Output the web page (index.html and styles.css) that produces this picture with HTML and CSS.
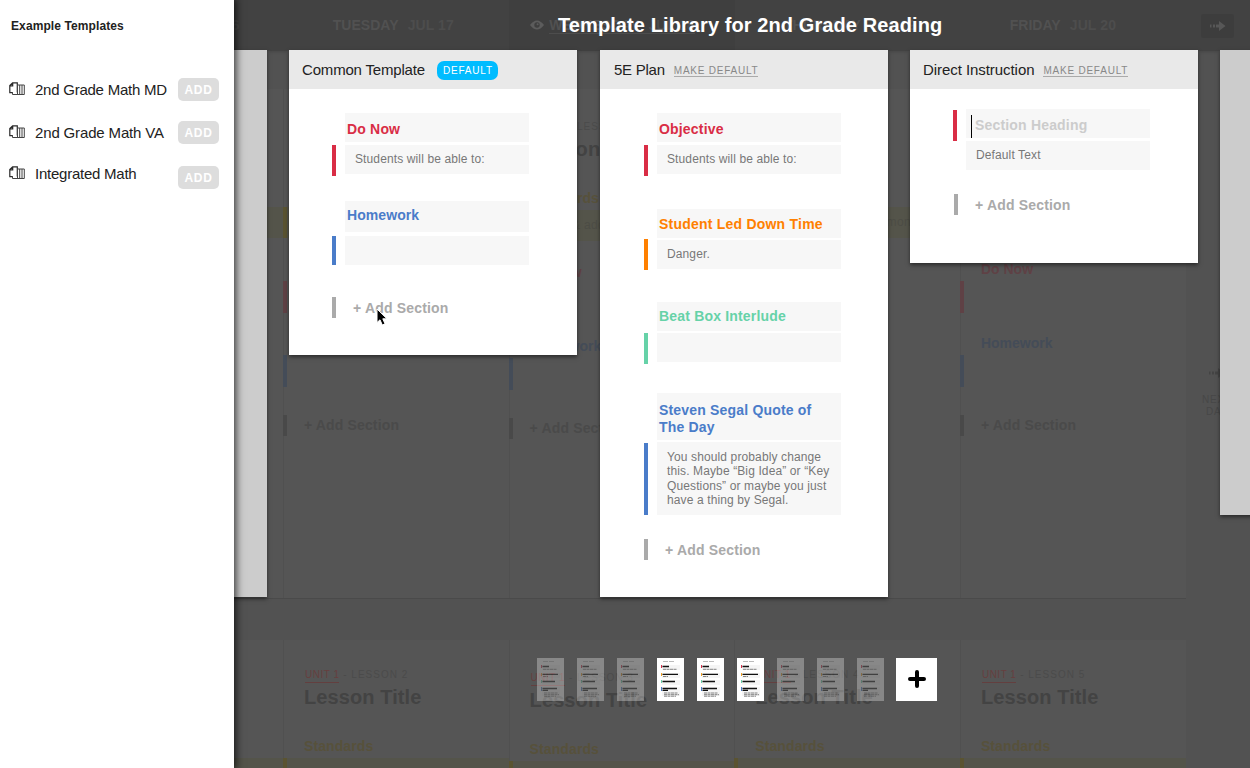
FILE: index.html
```html
<!DOCTYPE html>
<html lang="en">
<head>
<meta charset="utf-8">
<title>Template Library</title>
<link rel="stylesheet" href="styles.css">
</head>
<body>
<svg class="defs" aria-hidden="true">
  <symbol id="stack" viewBox="0 0 16 14">
    <path d="M8.300 10.500V.8H3.600L.8 3.600v7h3M.8 3.800h2.900V1" fill="none" stroke="#2a2a2a" stroke-width="1.200"/>
    <path d="M8.300 3h7v9.500H3.500v-2M8.500 3v9.500M10.700 3v9.500M13 3v9.500" fill="none" stroke="#444" stroke-width="1"/>
  </symbol>
  <symbol id="arrow" viewBox="0 0 16 10">
    <path d="M0 3.500h1.500v3H0zM3 3.500h2v3H3zM6 3.500h3V0l6.500 5L9 10V6.500H6z"/>
  </symbol>
  <symbol id="page" viewBox="0 0 27 43">
    <path d="M0 0h27v43H0z" fill="#fff"/>
    <path d="M5 7h18v5H5zM5 15h18v5H5zM5 22h18v5H5zM5 29h18v9H5z" fill="#f5f5f5"/>
    <path d="M6 3.500h5M12 3.500h5" stroke="#aaa" stroke-width=".8"/>
    <path d="M5.500 8.500h6.500M5.500 16.300h15.500M5.500 23.500h12.500M5.500 30.500h14.500M5.500 32.300h5.500" stroke="#111" stroke-width="1.300"/>
    <path d="M6 11.300h14M6 18.500h5M7 35h14M7 36.700h15M7 38.200h12" stroke="#777" stroke-width=".9" stroke-dasharray="3 .5"/>
    <path d="M4.500 7v3" stroke="#d9304a"/><path d="M4.500 15v3" stroke="#f0a020"/><path d="M4.500 22v3" stroke="#66d2a8"/><path d="M4.500 29v4" stroke="#4b7cc8"/>
  </symbol>
</svg>
<div class="screen">
  <div class="planner">
    <header class="days">
      <div class="day day-first"><b>MONDAY</b><span>JUL 16</span></div>
      <div class="day"><b>TUESDAY</b><span>JUL 17</span></div>
      <div class="day day-current">
        <svg class="eye" viewBox="0 0 14 10"><path d="M0 5Q7-4 14 5Q7 14 0 5z" fill="#5c5c5c"/><circle cx="7" cy="5" r="2.700" fill="#3f3f3f"/><circle cx="7.600" cy="4.300" r="1" fill="#5c5c5c"/></svg>
        <div class="day-link"><b>WEDNESDAY</b><span>JUL 18</span></div>
      </div>
      <div class="day"><b>THURSDAY</b><span>JUL 19</span></div>
      <div class="day"><b>FRIDAY</b><span>JUL 20</span></div>
      <div class="next-button"><svg class="arrow"><use href="#arrow"/></svg></div>
    </header>
    <div class="week">
      <div class="rows">
        <div class="row row-full">
          <div class="lesson"><div class="band"></div></div>
          <div class="lesson">
            <div class="unit"><u>UNIT 1</u> - LESSON 2</div><div class="lesson-title">Lesson Title</div>
            <div class="standards">Standards</div><div class="band"><i></i><span>Search &amp; add from common</span></div>
            <div class="item item-red">Do Now</div><div class="item item-blue">Homework</div><div class="more">+ Add Section</div>
          </div>
          <div class="lesson lesson-current">
            <div class="unit"><u>UNIT 1</u> - LESSON 3</div><div class="lesson-title">Lesson Title</div>
            <div class="standards">Standards</div><div class="band"><i></i><span>Search &amp; add from common</span></div>
            <div class="item item-red">Do Now</div><div class="item item-blue">Homework</div><div class="more">+ Add Section</div>
          </div>
          <div class="lesson">
            <div class="unit"><u>UNIT 1</u> - LESSON 4</div><div class="lesson-title">Lesson Title</div>
            <div class="standards">Standards</div><div class="band"><i></i><span>Search &amp; add from common</span></div>
            <div class="item item-red">Do Now</div><div class="item item-blue">Homework</div><div class="more">+ Add Section</div>
          </div>
          <div class="lesson">
            <div class="unit"><u>UNIT 1</u> - LESSON 5</div><div class="lesson-title">Lesson Title</div>
            <div class="standards">Standards</div><div class="band"><i></i><span>Search &amp; add from common</span></div>
            <div class="item item-red">Do Now</div><div class="item item-blue">Homework</div><div class="more">+ Add Section</div>
          </div>
        </div>
        <div class="row row-next">
          <div class="lesson"><div class="band"></div></div>
          <div class="lesson"><div class="unit"><u>UNIT 1</u> - LESSON 2</div><div class="lesson-title">Lesson Title</div><div class="standards">Standards</div><div class="band"><i></i></div></div>
          <div class="lesson lesson-current"><div class="unit"><u>UNIT 1</u> - LESSON 3</div><div class="lesson-title">Lesson Title</div><div class="standards">Standards</div><div class="band"><i></i></div></div>
          <div class="lesson"><div class="unit"><u>UNIT 1</u> - LESSON 4</div><div class="lesson-title">Lesson Title</div><div class="standards">Standards</div><div class="band"><i></i></div></div>
          <div class="lesson"><div class="unit"><u>UNIT 1</u> - LESSON 5</div><div class="lesson-title">Lesson Title</div><div class="standards">Standards</div><div class="band"><i></i></div></div>
        </div>
      </div>
      <div class="next-day"><svg class="arrow"><use href="#arrow"/></svg><div>NEXT<br>DAY</div></div>
    </div>
  </div>

  <main class="library">
    <h1 class="library-title">Template Library for 2nd Grade Reading</h1>
    <div class="cards">
      <div class="card card-prev"></div>
      <article class="card card-common">
        <header class="card-head"><span class="name">Common Template</span><span class="badge">DEFAULT</span></header>
        <section class="section red s-donow"><h2>Do Now</h2><i></i><p>Students will be able to:</p></section>
        <section class="section blue s-homework"><h2>Homework</h2><i></i><p></p></section>
        <div class="add-section"><i></i><span>+ Add Section</span></div>
      </article>
      <article class="card card-plan">
        <header class="card-head"><span class="name">5E Plan</span><a class="make">MAKE DEFAULT</a></header>
        <section class="section red s-objective"><h2>Objective</h2><i></i><p>Students will be able to:</p></section>
        <section class="section orange s-down"><h2>Student Led Down Time</h2><i></i><p>Danger.</p></section>
        <section class="section green s-beat"><h2>Beat Box Interlude</h2><i></i><p></p></section>
        <section class="section blue s-quote"><h2>Steven Segal Quote of<br>The Day</h2><i></i><p>You should probably change<br>this. Maybe “Big Idea” or “Key<br>Questions” or maybe you just<br>have a thing by Segal.</p></section>
        <div class="add-section"><i></i><span>+ Add Section</span></div>
      </article>
      <article class="card card-direct">
        <header class="card-head"><span class="name">Direct Instruction</span><a class="make">MAKE DEFAULT</a></header>
        <section class="section red s-new"><h2><b class="caret"></b>Section Heading</h2><i></i><p>Default Text</p></section>
        <div class="add-section"><i></i><span>+ Add Section</span></div>
      </article>
      <div class="card card-next"></div>
    </div>
    <nav class="pager">
      <svg class="thumb dim"><use href="#page"/></svg>
      <svg class="thumb dim"><use href="#page"/></svg>
      <svg class="thumb dim"><use href="#page"/></svg>
      <svg class="thumb"><use href="#page"/></svg>
      <svg class="thumb"><use href="#page"/></svg>
      <svg class="thumb"><use href="#page"/></svg>
      <svg class="thumb dim"><use href="#page"/></svg>
      <svg class="thumb dim"><use href="#page"/></svg>
      <svg class="thumb dim"><use href="#page"/></svg>
      <div class="new-template"><svg width="18" height="18" viewBox="0 0 18 18"><path d="M9 2v14M2 9h14" stroke="#000" stroke-width="4" stroke-linecap="round"/></svg></div>
    </nav>
  </main>

  <aside class="sidebar">
    <h3>Example Templates</h3>
    <div class="example"><svg class="stack"><use href="#stack"/></svg><span>2nd Grade Math MD</span><button>ADD</button></div>
    <div class="example example-va"><svg class="stack"><use href="#stack"/></svg><span>2nd Grade Math VA</span><button>ADD</button></div>
    <div class="example example-int"><svg class="stack"><use href="#stack"/></svg><span>Integrated Math</span><button>ADD</button></div>
  </aside>

  <svg class="pointer" viewBox="0 0 13 19"><path d="M1 1v13.500l3-2.700 2.300 5.200 2.700-1.200-2.200-5h4.200z" fill="#000" stroke="#fff" stroke-width="1"/></svg>
</div>
</body>
</html>
```

FILE: styles.css
```css
* { box-sizing: border-box; }
body { margin: 0; font-family: "Liberation Sans", Arial, sans-serif; overflow: hidden; }
h1, h2, h3, p { margin: 0; }
svg { display: block; }
.defs { position: absolute; width: 0; height: 0; }
.screen { position: relative; width: 1250px; height: 768px; overflow: hidden; background: #525252; }

/* dimmed planner behind the library */
.planner { position: absolute; inset: 0; display: flex; flex-direction: column; }
.days { display: flex; flex: none; height: 51px; padding-left: 58px; background: #424242; color: #515151; font-size: 14px; line-height: 50px; box-shadow: 0 1px 3px rgba(0,0,0,.15); }
.day { display: flex; flex: none; gap: 9px; width: 225.67px; padding-left: 49px; }
.day span { font-weight: bold; color: #4d4d4d; letter-spacing: .1px; }
.day b { letter-spacing: .05px; }
.day-first { padding-left: 65px; }
.day-current { gap: 5px; padding-left: 21px; background: #3f3f3f; }
.eye { width: 14px; height: 10px; margin-top: 20px; }
.day-link { display: flex; gap: 9px; height: 34px; border-bottom: 1px solid #4d4d4d; }
.next-button { display: flex; align-items: center; justify-content: center; width: 33px; height: 24px; margin: 14px 0 0 15px; border-radius: 3px; background: #3d3d3d; }
.arrow { width: 16px; height: 10px; fill: #575757; }
.week { display: flex; flex: 1; }
.rows { width: 1186px; }
.row { display: flex; padding-left: 57.300px; }
.row-full { height: 548px; padding-top: 38px; border-bottom: 1px solid #4a4a4a; }
.row-next { height: 169px; padding-top: 41px; }
.lesson { width: 225.670px; padding-top: 27px; background: #555; border-left: 1px solid #505050; }
.lesson-current { padding-top: 30px; }
.unit { height: 18px; margin-left: 21px; font-size: 10px; line-height: 15px; letter-spacing: 1px; color: #4b4b4b; }
.unit u { display: inline-block; letter-spacing: .5px; color: #663f3f; text-decoration: none; border-bottom: 1px solid #633f3f; }
.lesson-title { margin-left: 20px; font-size: 20px; font-weight: bold; line-height: 24px; letter-spacing: .1px; color: #434343; }
.standards { margin: 28px 0 0 20px; font-size: 14px; font-weight: bold; line-height: 18px; color: #57513b; letter-spacing: .1px; }
.band { display: flex; width: 225.670px; height: 31px; margin: 3px 0 0 -1px; background: #54544a; font-size: 12px; line-height: 30px; letter-spacing: .3px; color: #4c4c45; white-space: nowrap; overflow: hidden; }
.band i { flex: none; width: 4px; background: #5a5331; }
.band span { margin-left: 16px; }
.lesson:first-child .band { margin-top: 91px; }
.row-next .band { height: 10px; }
.item { height: 74px; padding: 22px 0 0 20px; font-size: 14px; font-weight: bold; line-height: 18px; }
.item::after { content: ""; display: block; width: 4px; height: 32px; margin: 3px 0 0 -21px; background: currentColor; }
.item-red { color: #5f4145; }
.item-blue { color: #444c58; }
.more { height: 21px; margin: 29px 0 0 -1px; padding-left: 17px; border-left: 4px solid #494949; color: #4a4a4a; font-size: 14px; font-weight: bold; line-height: 20px; letter-spacing: .15px; }
.next-day { width: 38px; margin: 317px 0 0 12px; text-align: center; font-size: 10px; line-height: 12px; letter-spacing: .8px; color: #474747; }
.next-day .arrow { margin: 0 0 16px 11px; fill: #444; }

/* library overlay */
.library { position: absolute; inset: 0; display: flex; flex-direction: column; }
.library-title { width: 386px; margin-left: 558px; height: 50px; font-size: 20px; line-height: 50px; color: #fff; letter-spacing: .09px; white-space: nowrap; }
.cards { display: flex; align-items: flex-start; gap: 22px; height: 608px; margin-left: -21px; }
.card { flex: none; width: 288px; background: #fff; box-shadow: 0 2px 4px rgba(0,0,0,.5); }
.card-prev, .card-next { background: #ccc; }
.card-prev { height: 547px; }
.card-next { height: 465px; }
.card-common { height: 305px; }
.card-plan { height: 547px; margin-left: 1px; }
.card-direct { height: 213px; }
.card-head { display: flex; height: 39px; padding-left: 13px; background: #e9e9e9; }
.card-plan .card-head { padding-left: 14px; }
.name { font-size: 15px; line-height: 40px; letter-spacing: -.18px; color: #222; }
.card-plan .name { letter-spacing: -.25px; }
.card-direct .name { letter-spacing: -.06px; }
.badge { height: 19px; margin: 11px 0 0 12px; padding: 0 5px 0 6px; border-radius: 7px; background: #00bcff; color: #fff; font-size: 10px; line-height: 19px; letter-spacing: .8px; }
.make { height: 17px; margin: 10px 0 0 9px; border-bottom: 1px solid #aaa; color: #888; font-size: 10px; line-height: 21px; letter-spacing: .77px; }
.section { display: grid; grid-template-columns: 4px 184px; grid-template-rows: auto auto; column-gap: 9px; row-gap: 3px; margin-left: 43px; }
.section h2 { grid-column: 2; height: 29px; padding: 7.500px 0 0 2px; background: #f7f7f7; font-size: 14px; line-height: 17px; letter-spacing: .18px; white-space: nowrap; }
.section i { grid-column: 1; grid-row: 2; margin-bottom: -2px; }
.section p { grid-column: 2; grid-row: 2; min-height: 29px; padding: 7px 0 0 10px; background: #f7f7f7; color: #777; font-size: 12px; line-height: 14.330px; letter-spacing: .12px; white-space: nowrap; }
.card-plan .section, .card-plan .add-section { margin-left: 44px; }
.red h2 { color: #d92d45; } .red i { background: #d92d45; }
.blue h2 { color: #4a7cc9; } .blue i { background: #4a7cc9; }
.orange h2 { color: #ff8000; } .orange i { background: #ff8000; }
.green h2 { color: #66d2a8; } .green i { background: #66d2a8; }
.s-donow, .s-objective { margin-top: 24px; }
.s-homework { margin-top: 27px; row-gap: 4px; }
.s-homework h2 { height: 31px; padding-top: 6px; letter-spacing: .08px; }
.s-homework i { margin-bottom: 0; }
.s-down, .s-beat, .s-quote { row-gap: 2px; }
.s-down { margin-top: 35px; }
.s-down h2 { padding-top: 7px; letter-spacing: .22px; }
.s-down i { margin: -1px 0; }
.s-beat { margin-top: 33px; }
.s-beat h2 { padding-top: 6px; }
.s-quote { margin-top: 31px; }
.s-quote h2 { height: 47px; padding-top: 9px; }
.s-quote p { height: 73px; padding-top: 8px; }
.s-quote i { margin: 1px 0 0; }
.s-new { margin-top: 20px; }
.section.s-new h2 { position: relative; padding: 8px 0 0 9px; color: #ccc; }
.s-new i { grid-row: 1 / 3; height: 31px; margin-top: 1px; }
.caret { position: absolute; left: 5px; top: 6px; width: 1px; height: 23px; background: #000; }
.add-section { display: flex; height: 21px; margin: 32px 0 0 43px; gap: 17px; color: #aaa; font-size: 14px; font-weight: bold; line-height: 22px; letter-spacing: .18px; }
.add-section i { width: 4px; background: #aaa; }
.card-plan .add-section { margin-top: 24px; }
.card-direct .add-section { margin: 24px 0 0 44px; }
.pager { display: flex; gap: 13px; margin-left: 537px; }
.thumb { width: 27px; height: 43px; }
.dim { opacity: .3; }
.new-template { display: flex; align-items: center; justify-content: center; width: 41px; height: 43px; margin-left: -1px; padding-bottom: 1px; background: #fff; }

/* sidebar */
.sidebar { position: absolute; inset: 0 auto 0 0; width: 234px; padding: 18px 15px 0 9px; background: #fff; box-shadow: 0 0 8px 2px rgba(0,0,0,.75); }
.sidebar h3 { height: 60px; padding-left: 2px; font-size: 12px; line-height: 16px; letter-spacing: .1px; color: #222; }
.example { display: flex; height: 43px; }
.example span { flex: 1; font-size: 15px; line-height: 24px; letter-spacing: -.24px; color: #222; white-space: nowrap; }
.example-va span { letter-spacing: -.15px; }
.stack { width: 16px; height: 14px; margin: 4px 10px 0 0; }
.example button { width: 41px; height: 23px; padding: 0; border: 0; border-radius: 5px; background: #ddd; color: #fff; font: bold 12px/24px "Liberation Sans", Arial, sans-serif; letter-spacing: .6px; }
.example-int span { line-height: 20px; }
.example-int .stack { margin-top: 2px; }
.example-int button { margin-top: 2px; }
.pointer { position: absolute; left: 376px; top: 308px; width: 13px; height: 19px; }
```
